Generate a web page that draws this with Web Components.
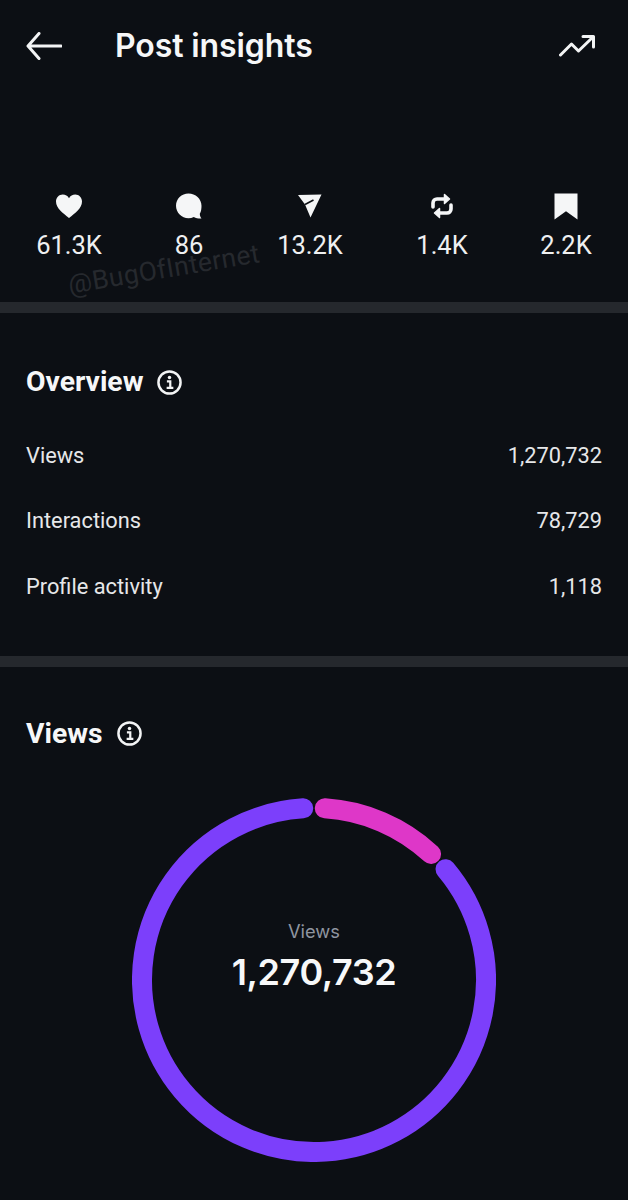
<!DOCTYPE html>
<html><head><meta charset="utf-8"><style>
html,body{margin:0;padding:0;background:#0c0f14;}
body{font-family:Roboto,"Liberation Sans",sans-serif;color:#f3f4f5;width:628px;height:1200px;overflow:hidden}
</style></head><body>
<template id="t-header"><style>
:host{display:flex;align-items:center;height:92px;padding:0 33px 0 26px;box-sizing:border-box}
svg{display:block}
h1{font:600 32px/1 Inter,sans-serif;margin:0 0 0 53px;flex:1;color:#f6f7f8;letter-spacing:-.1px}
</style>
<svg width="36" height="28" viewBox="0 0 36 28" fill="none" stroke="#f3f4f5" stroke-width="3" stroke-linecap="round" stroke-linejoin="round"><path d="M2.500 14H35M13 1.500 2 14l11 12.500"/></svg>
<h1><slot></slot></h1>
<svg width="36" height="24" viewBox="0 0 36 24" fill="none" stroke="#f3f4f5" stroke-width="3" stroke-linecap="round" stroke-linejoin="round"><path d="M1.500 21 12.500 10l7 7L34 3M24 2.500h10.500V13"/></svg>
</template>
<template id="t-stat"><style>
:host{display:flex;flex-direction:column;align-items:center;position:relative;z-index:1}
.i{height:28px;display:flex;align-items:center;justify-content:center}
.n{font:400 25.500px/28px Roboto,sans-serif;margin-top:11px;white-space:nowrap;color:#eff0f1}
::slotted(svg){display:block}
</style><div class="i"><slot name="icon"></slot></div><div class="n"><slot></slot></div></template>
<template id="t-section"><style>
:host{display:block;border-bottom:11px solid #25282d}
:host([last]){border-bottom:0}
.h{display:flex;align-items:center;gap:14px;font:700 28.300px/32px Roboto,sans-serif;color:#f6f7f8}
svg{display:block}
</style><div class="h"><slot name="title"></slot>
<svg width="25" height="25" viewBox="0 0 26 26" fill="none"><circle cx="13" cy="13" r="11.500" stroke="#f3f4f5" stroke-width="2.600"/><circle cx="13" cy="7.800" r="1.800" fill="#f3f4f5"/><path d="M10.300 11.800H13.800V18M10 18.600h7" stroke="#f3f4f5" stroke-width="2.300"/></svg>
</div><slot></slot></template>
<template id="t-row"><style>
:host{display:flex;justify-content:space-between;align-items:center;height:65.500px;font:400 21.800px/28px Roboto,sans-serif;color:#e6e7e9}
</style><span><slot name="k"></slot></span><span><slot></slot></span></template>
<template id="t-ring"><style>
:host{display:block;position:relative;width:364px;height:364px}
svg{display:block}
.c{position:absolute;inset:0;display:flex;flex-direction:column;align-items:center;justify-content:center;padding-bottom:47px;box-sizing:border-box}
.l{font:400 18.300px/24px Inter,sans-serif;color:#8f95a0}
.v{font:600 36px/44px Inter,sans-serif;color:#f7f8f9;margin-top:7px;letter-spacing:-.4px}
</style>
<svg id="s" width="364" height="364" viewBox="0 0 364 364" fill="none" stroke-width="20" stroke-linecap="round"></svg>
<div class="c"><div class="l"><slot name="label"></slot></div><div class="v"><slot></slot></div></div></template>
<template id="t-app"><style>
:host{display:block;position:relative}
.stats{display:grid;grid-template-columns:120px 120px 122px 142px 106px;padding:100px 0 0 9px;height:210px;box-sizing:border-box;align-items:start}
.wm{position:absolute;left:67px;top:254px;font:400 26.500px/30px Roboto,sans-serif;color:#26292e;transform:rotate(-9.500deg);white-space:nowrap;letter-spacing:.4px;pointer-events:none}
.bar{height:11px;background:#25282d}
</style>
<x-header>Post insights</x-header>
<div class="stats"><slot name="stats"></slot></div>
<div class="wm">@BugOfInternet</div>
<div class="bar"></div>
<x-section style="padding:53px 26px 36px"><span slot="title">Overview</span><div style="margin-top:25px"><slot name="rows"></slot></div></x-section>
<x-section last style="padding:51px 26px 0"><span slot="title">Views</span><div style="display:flex;justify-content:center;margin-top:48px"><slot name="ring"></slot></div></x-section>
</template>
<script>
const tpl=(id,el)=>{const r=el.attachShadow({mode:'open'});r.appendChild(document.getElementById(id).content.cloneNode(true));return r};
for(const [n,id] of [['x-header','t-header'],['x-stat','t-stat'],['x-section','t-section'],['x-row','t-row'],['x-app','t-app']])
customElements.define(n,class extends HTMLElement{constructor(){super();tpl(id,this)}});
customElements.define('x-ring',class extends HTMLElement{constructor(){super();const r=tpl('t-ring',this);
const p=a=>{const t=a*Math.PI/180;return (182+172*Math.sin(t)).toFixed(2)+' '+(182-172*Math.cos(t)).toFixed(2)};
const arc=(a,b,c,l)=>`<path d="M${p(a)}A172 172 0 ${l} 1 ${p(b)}" stroke="${c}"/>`;
r.getElementById('s').innerHTML=arc(49.9,356.4,'#7c3ffb',1)+arc(3.6,42.9,'#de37c8',0);}});
</script>
<x-app>
<x-stat slot="stats"><svg slot="icon" width="28" height="24" viewBox="0 0 28 24"><path fill="#f5f6f7" d="M14 24C8 19 1 14.500 1 7.500 1 3.300 4.200.500 7.700.500c2.700 0 5 1.300 6.300 3.700C15.300 1.800 17.600.500 20.300.500 23.800.500 27 3.300 27 7.500 27 14.500 20 19 14 24Z"/></svg>61.3K</x-stat>
<x-stat slot="stats"><svg slot="icon" width="27" height="26" viewBox="0 0 27 26"><path fill="#f5f6f7" d="M12.500.500C5.600.500 0 5.900 0 12.800S5.600 25.200 12.500 25.200c1.900 0 3.700-.4 5.300-1.200 2.300 1.200 5 1.700 7.700 1.500-1.100-1.300-1.700-2.900-1.700-4.700C25.200 18.500 25.500 15.500 25.500 12.800 25.500 5.900 19.500.500 12.500.500Z"/></svg>86</x-stat>
<x-stat slot="stats"><svg slot="icon" width="24" height="24" viewBox="0 0 24 24"><path fill="#f5f6f7" d="M0 1 23.500.500 12.500 23.500 7 10.500Z"/><path d="M7 10.500 15.500 6" stroke="#0c0f14" stroke-width="1.600"/></svg>13.2K</x-stat>
<x-stat slot="stats"><svg slot="icon" width="22" height="26" viewBox="0 0 22 26" fill="none" stroke="#f5f6f7" stroke-width="3.600" stroke-linejoin="round" stroke-linecap="round"><path d="M2 14V10c0-2.500 1.800-4 4-4h7"/><path d="M20 12v4c0 2.500-1.800 4-4 4H9"/><path fill="#f5f6f7" stroke-width="1.500" d="M13.500 1.500 18.500 6 13.500 10.500ZM8.500 15.500 3.500 20 8.500 24.500Z"/></svg>1.4K</x-stat>
<x-stat slot="stats"><svg slot="icon" width="24" height="27" viewBox="0 0 24 27"><path fill="#f5f6f7" d="M.500.500h23v26L12 18.200.500 26.500Z"/></svg>2.2K</x-stat>
<x-row slot="rows"><span slot="k">Views</span>1,270,732</x-row>
<x-row slot="rows"><span slot="k">Interactions</span>78,729</x-row>
<x-row slot="rows"><span slot="k">Profile activity</span>1,118</x-row>
<x-ring slot="ring"><span slot="label">Views</span>1,270,732</x-ring>
</x-app>
</body></html>
